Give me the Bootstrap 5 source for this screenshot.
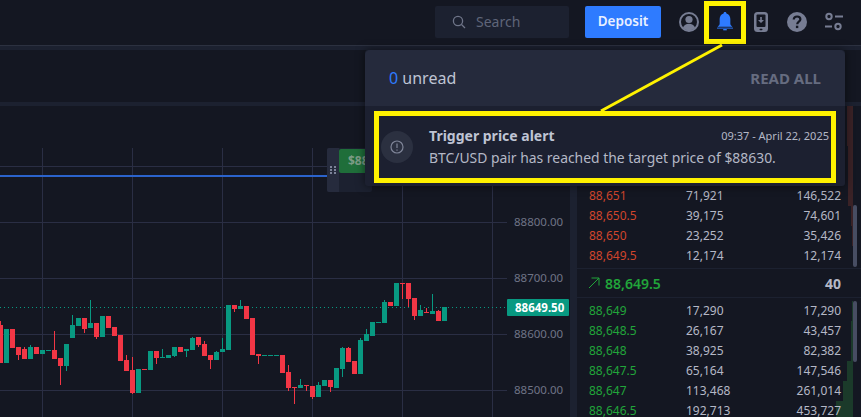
<!DOCTYPE html>
<html lang="en">
<head>
    <meta charset="UTF-8">
    <meta name="viewport" content="width=device-width, initial-scale=1.0">
    <title>Trigger price alert</title>
    <link rel="stylesheet" href="https://cdn.jsdelivr.net/npm/bootstrap@5.3.0/dist/css/bootstrap.min.css">
    <script src="https://cdn.jsdelivr.net/npm/bootstrap@5.3.0/dist/js/bootstrap.bundle.min.js"></script>
    <style>
        html, body { height: 417px; overflow: hidden; }
        body { position: relative; background: #1c2130; color: #b4b8c6; font-family: "Noto Sans", sans-serif; font-size: 12px; }
        .top-bar { height: 46px; background: #141722; border-bottom: 1px solid #2c3140; padding: 0 16px 2px 0; gap: 16px; }
        .search-box { width: 134px; height: 32px; background: #1c2130; border-radius: 2px; padding-left: 17px; gap: 10px; }
        .search-box input { width: 90px; background: none; border: 0; outline: 0; padding: 0; color: #666c80; font-size: 14px; }
        .search-box input::placeholder { color: #5f6579; opacity: 1; }
        .deposit-btn { width: 76px; height: 32px; padding: 0; background: #2e7bff; border: 0; border-radius: 2px; font-size: 13.5px; font-weight: 600; color: #e9f0ff; }
        .icon-row { gap: 12px; }
        .icon-slot { width: 24px; height: 24px; }
        .icon-slot svg { display: block; }
        .bell-mark { width: 42px; height: 43px; margin: 1px -9px 0; padding-bottom: 3px; border: 5px solid #fff200; }
        .tool-strip { height: 52px; margin-top: 4px; background: #141722; }
        .main-area { height: 311px; margin-top: 4px; gap: 7px; }
        .chart-wrap { position: relative; width: 570px; height: 311px; background: #141722; }
        .chart-wrap svg { display: block; }
        .axis-text { font-family: "Noto Sans", sans-serif; font-size: 11.5px; fill: #6f7486; }
        .tag-text { font-family: "Noto Sans", sans-serif; font-size: 11.5px; font-weight: 700; fill: #fff; }
        .order-handle { position: absolute; left: 327px; top: 42px; width: 45px; height: 44px; background: #1c2130; border-radius: 2px; }
        .handle-grip { width: 12px; background: #262b3d; border-radius: 2px 0 0 2px; }
        .order-price { width: 33px; height: 24px; margin-top: 1px; padding-left: 9px; background: #1f6e3a; color: #7d9c86; font-size: 12px; font-weight: 700; line-height: 24px; border-radius: 2px 0 0 2px; }
        .book-panel { width: 284px; background: #141722; }
        .book-side { height: 161px; }
        .book-side.bids-side { height: 121px; padding-top: 3px; }
        .book-rows { width: 276px; }
        .book-line { height: 20px; padding: 0 12px; line-height: 20px; background-repeat: no-repeat; background-position: right center; background-size: var(--depth) 100%; }
        .asks-line { background-image: linear-gradient(#3a2226, #3a2226); }
        .bids-line { background-image: linear-gradient(#1b3a2a, #1b3a2a); }
        .line-price { width: 97px; }
        .line-size { flex: 1; }
        .line-total { text-align: right; }
        .asks-price { color: #d0452c; }
        .bids-price { color: #21a53a; }
        .mid-line { height: 30px; margin-top: 1px; width: 284px; padding: 0 20px 0 11px; border-top: 1px solid #1c2130; border-bottom: 1px solid #1c2130; }
        .mid-price { margin-left: 1px; color: #21a53a; font-size: 14px; font-weight: 600; }
        .mid-size { font-size: 14px; font-weight: 700; }
        .scroll-track { width: 4px; }
        .scroll-thumb { background: #474d62; border-radius: 2px; }
        .alert-pop { position: absolute; left: 365px; top: 50px; width: 480px; height: 136px; background: #1c2030; border: 0; border-radius: 3px; box-shadow: 0 0 10px rgba(0, 0, 0, .55); color: #b4b8c6; }
        .pop-head { height: 56px; padding: 0 24px; background: #252a3c; border: 0; border-radius: 3px 3px 0 0; }
        .pop-count { font-size: 16px; color: #bfc4d4; }
        .pop-count b { font-weight: 400; color: #2e7bff; }
        .read-all { font-size: 15px; font-weight: 700; color: #666c80; }
        .list-group .list-group-item.alert-item { height: 72px; margin: 5px 9px 0; padding: 0 2px; background: none; border: 5px solid #fff200; border-radius: 0; color: #b4b8c6; gap: 16px; }
        .alert-badge { width: 32px; height: 32px; background: #2b3040; border-radius: 50%; }
        .alert-title { font-size: 14px; font-weight: 700; line-height: 22px; color: #bfc4d4; }
        .alert-time { font-size: 11px; color: #b4b8c6; }
        .alert-text { font-size: 13.9px; line-height: 22px; }
        .pointer-line { position: absolute; left: 0; top: 0; pointer-events: none; }
    </style>
</head>
<body>
<header class="top-bar d-flex justify-content-end align-items-center">
    <div class="search-box d-flex align-items-center">
        <svg width="14" height="14" viewBox="0 0 14 14" fill="none" stroke="#6f7589" stroke-width="1.3"><circle cx="6" cy="6" r="4.6"/><path d="M9.5 9.5 13 13"/></svg>
        <input type="text" placeholder="Search">
    </div>
    <button class="btn deposit-btn">Deposit</button>
    <div class="icon-row d-flex align-items-center">
        <div class="icon-slot">
            <svg width="24" height="24" viewBox="0 0 24 24" fill="none"><circle cx="12" cy="12" r="9" stroke="#777d93" stroke-width="2"/><circle cx="12" cy="9.5" r="3.6" fill="#777d93"/><path d="M5.8 18c1.2-3 3.400-4.200 6.200-4.200s5 1.200 6.200 4.200A9 9 0 0 1 5.800 18z" fill="#777d93"/></svg>
        </div>
        <div class="icon-slot bell-mark d-flex align-items-center justify-content-center">
            <svg width="16" height="20" viewBox="0 0 18 22" fill="#2e7bff"><path d="M9 1c.9 0 1.500.6 1.600 1.500C13.400 3.300 15 5.800 15 8.800v5c0 1.500.9 2.500 2 3.200v.5H1V17c1.100-.7 2-1.700 2-3.200v-5c0-3 1.600-5.500 4.400-6.300C7.500 1.600 8.100 1 9 1z"/><rect x="0" y="18.500" width="18" height="1"/><rect x="7" y="20" width="4" height="1.500"/></svg>
        </div>
        <div class="icon-slot">
            <svg width="24" height="24" viewBox="0 0 24 24"><rect x="5" y="2" width="14" height="20" rx="3.500" fill="#777d93"/><rect x="7.500" y="4.500" width="9" height="12.500" rx="1" fill="#141722"/><path d="M11.200 7h1.600v3H15l-3 3-3-3h2.200z" fill="#777d93"/><rect x="10.500" y="18.700" width="3" height="1.500" rx=".7" fill="#141722"/></svg>
        </div>
        <div class="icon-slot">
            <svg width="24" height="24" viewBox="0 0 24 24"><circle cx="12" cy="12" r="10" fill="#777d93"/><path d="M8.700 9.500c.2-2 1.600-3 3.400-3 1.900 0 3.300 1.100 3.300 2.800 0 2.500-3.200 2.400-3.200 5" fill="none" stroke="#141722" stroke-width="2.200"/><rect x="10.900" y="15.700" width="2.400" height="2.400" fill="#141722"/></svg>
        </div>
        <div class="icon-slot">
            <svg width="24" height="24" viewBox="0 0 24 24" fill="none" stroke="#777d93" stroke-width="2"><circle cx="8" cy="6.500" r="2.700"/><path d="M14 6.500h8"/><circle cx="17" cy="16.500" r="2.700"/><path d="M4 16.500h7"/></svg>
        </div>
    </div>
</header>
<div class="tool-strip"></div>
<div class="main-area d-flex">
    <div class="chart-wrap">
        <svg id="chart" width="570" height="311" viewBox="0 106 570 311"></svg>
        <div class="order-handle d-flex">
            <div class="handle-grip d-flex align-items-center justify-content-center">
                <svg width="6" height="8" viewBox="0 0 6 8" fill="#7d8499"><rect width="2" height="2"/><rect x="4" width="2" height="2"/><rect y="3" width="2" height="2"/><rect x="4" y="3" width="2" height="2"/><rect y="6" width="2" height="2"/><rect x="4" y="6" width="2" height="2"/></svg>
            </div>
            <div class="order-price">$88</div>
        </div>
    </div>
    <div class="book-panel">
        <div class="book-side d-flex">
            <div class="book-rows" id="asksRows"></div>
            <div class="scroll-track d-flex flex-column justify-content-end"><div class="scroll-thumb" style="height: 62px"></div></div>
        </div>
        <div class="mid-line d-flex align-items-center justify-content-between">
            <div class="d-flex align-items-center gap-1">
                <svg width="12" height="12" viewBox="0 0 12 12" fill="none" stroke="#21a53a" stroke-width="1"><path d="M1 11 11 1M3.500 1H11v7.500"/></svg>
                <span class="mid-price">88,649.5</span>
            </div>
            <span class="mid-size">40</span>
        </div>
        <div class="book-side bids-side d-flex">
            <div class="book-rows" id="bidsRows"></div>
            <div class="scroll-track"><div class="scroll-thumb" style="height: 61px"></div></div>
        </div>
    </div>
</div>

<div class="card alert-pop">
    <div class="card-header pop-head d-flex justify-content-between align-items-center">
        <span class="pop-count"><b>0</b> unread</span>
        <span class="read-all">READ ALL</span>
    </div>
    <div class="list-group list-group-flush">
        <div class="list-group-item alert-item d-flex align-items-center">
            <div class="alert-badge d-flex align-items-center justify-content-center flex-shrink-0">
                <svg width="14" height="14" viewBox="0 0 14 14" fill="none" stroke="#7f8598" stroke-width="1.200"><circle cx="7" cy="7" r="6"/><path d="M7 3.500v4.500M7 9.500v1.200"/></svg>
            </div>
            <div class="flex-grow-1">
                <div class="d-flex justify-content-between align-items-center">
                    <span class="alert-title">Trigger price alert</span>
                    <span class="alert-time">09:37 - April 22, 2025</span>
                </div>
                <div class="alert-text">BTC/USD pair has reached the target price of $88630.</div>
            </div>
        </div>
    </div>
</div>

<svg class="pointer-line" width="861" height="417"><path d="M722 45 601 111" stroke="#fff200" stroke-width="3"/></svg>

<script>
    // candle data read off the chart: [isUp, bodyTop, bodyBottom, wickTop, wickBottom]
    const candles = [
        [0,65,103,61,103],[1,69,103,69,103],[0,69,88,69,88],[0,87,95,87,100],[0,89,99,87,99],[1,87,99,85,99],[0,87,94,87,94],[1,90,94,90,94],
        [1,90,91,90,91],[0,90,99,71,99],[0,98,106,98,125],[1,84,106,84,111],[1,65,78,55,78],[1,58,66,58,66],[0,58,69,58,73],[1,63,68,40,68],
        [0,63,77,63,79],[1,56,77,56,77],[0,56,68,56,68],[0,67,76,67,76],[0,75,101,75,101],[0,100,111,95,111],[0,110,133,97,134],[1,109,133,109,133],
        [0,109,110,109,110],[1,91,110,91,110],[0,91,98,91,104],[1,97,98,89,98],[1,95,98,95,98],[1,87,96,87,97],[0,87,92,87,92],[1,89,91,89,97],
        [1,78,90,77,90],[0,77,85,77,87],[0,84,96,81,96],[0,95,100,95,109],[1,92,100,91,100],[1,89,92,78,92],[1,45,90,45,90],[0,45,49,45,52],
        [1,46,49,40,49],[0,46,59,46,59],[0,58,95,58,95],[0,94,96,94,104],[1,95,96,95,96],[1,95,96,95,96],[1,95,96,95,96],[0,95,113,95,113],
        [0,112,128,105,131],[0,127,128,127,144],[1,125,128,119,128],[0,125,126,125,131],[0,126,137,126,139],[1,125,137,122,137],[1,120,126,120,126],[0,120,127,120,132],
        [1,108,128,108,128],[1,88,109,87,117],[0,88,102,87,102],[0,101,114,101,114],[1,80,114,78,114],[1,74,81,69,81],[1,62,76,62,76],[1,62,63,62,63],
        [1,42,63,40,63],[0,42,46,42,46],[1,23,46,23,46],[0,23,24,23,39],[0,23,39,23,47],[0,38,56,38,60],[1,50,56,45,56],[0,52,53,48,53],
        [1,51,54,34,54],[0,51,61,50,61],[1,47,61,47,61]
    ];

    const gridX = [42, 132, 222, 312, 402, 492];
    const gridY = [166, 222, 278, 334, 390];
    let chart = "";
    gridX.forEach(x => { chart += `<rect x="${x}" y="148" width="1" height="269" fill="#2a2e44"/>`; });
    gridY.forEach(y => { chart += `<rect x="0" y="${y}" width="507" height="1" fill="#2a2e44"/>`; });
    chart += `<rect x="0" y="175" width="327" height="2" fill="#2b63cc"/>`;
    chart += `<path d="M0 307.500H507" stroke="#089981" stroke-dasharray="1 3"/>`;
    candles.forEach((c, i) => {
        const color = c[0] ? "#089981" : "#f23645";
        const x = 6 * i;
        chart += `<rect x="${x}" y="${260 + c[3]}" width="1" height="${c[4] - c[3]}" fill="${color}"/>`;
        chart += `<rect x="${x - 2}" y="${260 + c[1]}" width="5" height="${c[2] - c[1]}" fill="${color}"/>`;
    });
    [["88800.00", 226], ["88700.00", 282], ["88600.00", 338], ["88500.00", 394]].forEach(a => {
        chart += `<text class="axis-text" x="514" y="${a[1]}">${a[0]}</text>`;
    });
    chart += `<rect x="507" y="299" width="62" height="17" rx="1" fill="#089981"/>`;
    chart += `<text class="tag-text" x="515" y="312">88649.50</text>`;
    document.getElementById("chart").innerHTML = chart;

    function bookRow(row, side) {
        return `<div class="book-line ${side}-line d-flex" style="--depth: ${row[3]}px">
            <span class="line-price ${side}-price">${row[0]}</span>
            <span class="line-size">${row[1]}</span>
            <span class="line-total">${row[2]}</span>
        </div>`;
    }

    const asks = [
        ["", "", "", 6], ["", "", "", 6], ["", "", "", 5], ["", "", "", 5],
        ["88,651", "71,921", "146,522", 5], ["88,650.5", "39,175", "74,601", 2],
        ["88,650", "23,252", "35,426", 1], ["88,649.5", "12,174", "12,174", 0]
    ];
    const bids = [
        ["88,649", "17,290", "17,290", 1], ["88,648.5", "26,167", "43,457", 2],
        ["88,648", "38,925", "82,382", 2], ["88,647.5", "65,164", "147,546", 6],
        ["88,647", "113,468", "261,014", 10], ["88,646.5", "192,713", "453,727", 17]
    ];
    document.getElementById("asksRows").innerHTML = asks.map(r => bookRow(r, "asks")).join("");
    document.getElementById("bidsRows").innerHTML = bids.map(r => bookRow(r, "bids")).join("");
</script>
</body>
</html>
